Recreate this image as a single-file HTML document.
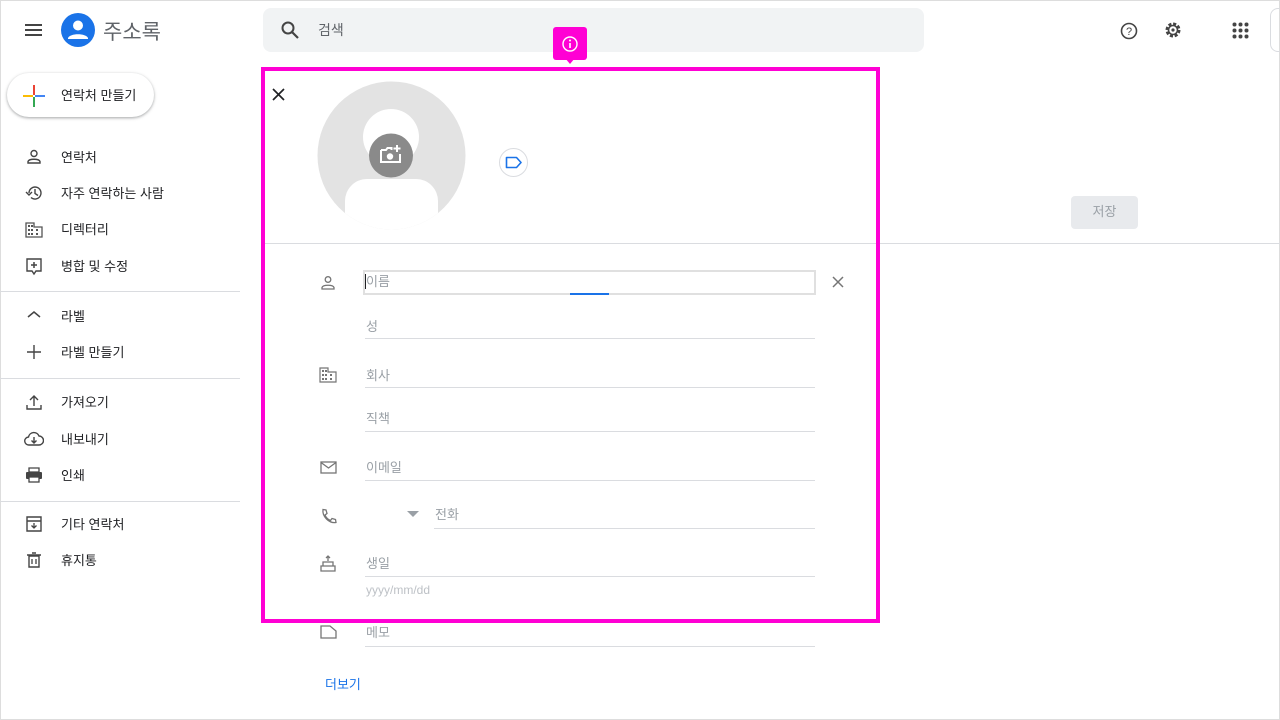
<!DOCTYPE html><html><head><meta charset="utf-8"><style>
*{margin:0;padding:0;box-sizing:border-box}
body{width:1280px;height:720px;position:relative;overflow:hidden;background:#fff;font-family:"Liberation Sans","Noto Sans CJK KR",sans-serif;color:#202124}
.a{position:absolute}
.nav{font-size:13px;color:#202124}
.lbl{font-size:13px;color:#9aa0a6}
.ln{height:1px;background:#dadce0}
.t{margin-top:-1px}
</style></head><body>
<div class="a" style="left:0;top:0;width:1280px;height:720px;border:1px solid #ddd"></div>
<svg class="a" style="left:24px;top:22px" width="20" height="16"><path d="M1 3h17M1 8h17M1 13h17" stroke="#444" stroke-width="2"/></svg>
<svg class="a" style="left:61px;top:13px" width="34" height="34"><circle cx="17" cy="17" r="17" fill="#1a73e8"/><circle cx="17" cy="12.5" r="5" fill="#fff"/><path d="M7 25c2-5 18-5 20 0v1H7z" fill="#fff"/></svg>
<div class="a" style="left:103px;top:16px;font-size:21px;color:#5f6368">주소록</div>
<div class="a" style="left:263px;top:8px;width:661px;height:44px;background:#f1f3f4;border-radius:8px"></div>
<svg class="a" style="left:280px;top:20px" width="20" height="20"><circle cx="8" cy="8" r="5.5" stroke="#444" stroke-width="2" fill="none"/><path d="M12 12l6 6" stroke="#444" stroke-width="2.2"/></svg>
<div class="a" style="left:318px;top:20px;font-size:14px;color:#5f6368">검색</div>
<svg class="a" style="left:1119px;top:21px" width="20" height="20"><circle cx="10" cy="10" r="7.5" stroke="#444" stroke-width="1.6" fill="none"/><text x="10" y="14" font-size="11" text-anchor="middle" fill="#444" font-family="Liberation Sans">?</text></svg>
<svg class="a" style="left:1163px;top:20px" width="20" height="20"><circle cx="10" cy="10" r="6" stroke="#444" stroke-width="3" stroke-dasharray="3 1.7" fill="none"/><circle cx="10" cy="10" r="4.5" stroke="#444" stroke-width="1.6" fill="none"/><circle cx="10" cy="10" r="1.6" fill="#444"/></svg>
<svg class="a" style="left:1232px;top:22px" width="18" height="18"><g fill="#444"><circle cx="2.5" cy="2.5" r="2"/><circle cx="8.5" cy="2.5" r="2"/><circle cx="14.5" cy="2.5" r="2"/><circle cx="2.5" cy="8.5" r="2"/><circle cx="8.5" cy="8.5" r="2"/><circle cx="14.5" cy="8.5" r="2"/><circle cx="2.5" cy="14.5" r="2"/><circle cx="8.5" cy="14.5" r="2"/><circle cx="14.5" cy="14.5" r="2"/></g></svg>
<div class="a" style="left:1270px;top:8px;width:20px;height:44px;border:1px solid #dadce0;border-radius:8px"></div>
<div class="a" style="left:7px;top:73px;width:147px;height:44px;border-radius:22px;background:#fff;box-shadow:0 1px 3px rgba(60,64,67,.35),0 1px 2px rgba(60,64,67,.15)"></div>
<svg class="a" style="left:22px;top:84px" width="24" height="24"><path d="M11 1h2v10h-2z" fill="#ea4335"/><path d="M13 11h10v2H13z" fill="#4285f4"/><path d="M11 13h2v10h-2z" fill="#34a853"/><path d="M1 11h10v2H1z" fill="#fbbc04"/></svg>
<div class="a nav" style="left:61px;top:85px">연락처 만들기</div>
<svg class="a" style="left:25px;top:148px" width="18" height="18"><circle cx="9" cy="5.5" r="3" stroke="#444" stroke-width="1.4" fill="none"/><path d="M3 15v-1.5c1-3 11-3 12 0V15z" stroke="#444" stroke-width="1.4" fill="none"/></svg>
<div class="a nav" style="left:61px;top:147px">연락처</div>
<svg class="a" style="left:25px;top:184px" width="18" height="18"><path d="M4 9a6 6 0 1 1 2 4.5" stroke="#444" stroke-width="1.4" fill="none"/><path d="M1 8l3 3 3-3" stroke="#444" stroke-width="1.4" fill="none"/><path d="M10 5v4.5l3 2" stroke="#444" stroke-width="1.4" fill="none"/></svg>
<div class="a nav" style="left:61px;top:183px">자주 연락하는 사람</div>
<svg class="a" style="left:25px;top:221px" width="18" height="18"><path d="M1 16V2h8v4h8v10z" stroke="#555" stroke-width="1.3" fill="none"/><g fill="#555"><rect x="3" y="4" width="2" height="2"/><rect x="6" y="4" width="2" height="2"/><rect x="3" y="8" width="2" height="2"/><rect x="6" y="8" width="2" height="2"/><rect x="3" y="12" width="2" height="2"/><rect x="6" y="12" width="2" height="2"/><rect x="11" y="8" width="2" height="2"/><rect x="11" y="12" width="2" height="2"/></g></svg>
<div class="a nav" style="left:61px;top:219px">디렉터리</div>
<svg class="a" style="left:25px;top:257px" width="18" height="20"><path d="M2 2h14v12h-5l-2 3-2-3H2z" stroke="#444" stroke-width="1.4" fill="none"/><path d="M9 5v6M6 8h6" stroke="#444" stroke-width="1.5"/></svg>
<div class="a nav" style="left:61px;top:256px">병합 및 수정</div>
<div class="a ln" style="left:0;top:291px;width:240px"></div>
<svg class="a" style="left:27px;top:310px" width="14" height="10"><path d="M1 7l6-5 6 5" stroke="#444" stroke-width="1.5" fill="none"/></svg>
<div class="a nav" style="left:61px;top:306px">라벨</div>
<svg class="a" style="left:27px;top:345px" width="14" height="14"><path d="M7 0v14M0 7h14" stroke="#444" stroke-width="1.4"/></svg>
<div class="a nav" style="left:61px;top:342px">라벨 만들기</div>
<div class="a ln" style="left:0;top:378px;width:240px"></div>
<svg class="a" style="left:26px;top:394px" width="16" height="16"><path d="M8 12V2M4 6l4-4 4 4M1 11v4h14v-4" stroke="#444" stroke-width="1.4" fill="none"/></svg>
<div class="a nav" style="left:61px;top:392px">가져오기</div>
<svg class="a" style="left:24px;top:431px" width="20" height="16"><path d="M5 14a4 4 0 0 1-.5-8A5.5 5.5 0 0 1 15 5a4 4 0 0 1 0 9z" stroke="#444" stroke-width="1.4" fill="none"/><path d="M10 6v6M7.5 9.5l2.5 2.5 2.5-2.5" stroke="#444" stroke-width="1.4" fill="none"/></svg>
<div class="a nav" style="left:61px;top:429px">내보내기</div>
<svg class="a" style="left:25px;top:467px" width="18" height="16"><path d="M4 1h10v4H4z" stroke="#444" stroke-width="1.3" fill="none"/><rect x="1" y="5" width="16" height="7" rx="1" fill="#444"/><rect x="4" y="10" width="10" height="5" fill="#fff" stroke="#444" stroke-width="1.3"/></svg>
<div class="a nav" style="left:61px;top:465px">인쇄</div>
<div class="a ln" style="left:0;top:501px;width:240px"></div>
<svg class="a" style="left:26px;top:516px" width="16" height="16"><path d="M1 1h14v14H1zM1 5h14" stroke="#444" stroke-width="1.4" fill="none"/><path d="M8 7v5M5.5 9.5 8 12l2.5-2.5" stroke="#444" stroke-width="1.3" fill="none"/></svg>
<div class="a nav" style="left:61px;top:514px">기타 연락처</div>
<svg class="a" style="left:27px;top:552px" width="14" height="16"><path d="M2 4h10v11H2zM0 3h14M5 1h4" stroke="#444" stroke-width="1.4" fill="none"/><path d="M5 7v5M9 7v5" stroke="#444" stroke-width="1.3"/></svg>
<div class="a nav" style="left:61px;top:550px">휴지통</div>
<svg class="a" style="left:272px;top:88px" width="13" height="13"><path d="M1 1l11 11M12 1 1 12" stroke="#202124" stroke-width="1.7"/></svg>
<svg class="a" style="left:317px;top:81px" width="149" height="149"><defs><clipPath id="c"><circle cx="74.5" cy="74.5" r="74"/></clipPath></defs><circle cx="74.5" cy="74.5" r="74" fill="#e3e3e3"/><g clip-path="url(#c)" fill="#fff"><circle cx="74" cy="56" r="28"/><rect x="28" y="98" width="93" height="60" rx="22"/></g><circle cx="74" cy="74.5" r="22" fill="#8a8a8a"/><path d="M64 69h5l1.5-2h4v2M64 69v12h19v-8" stroke="#fff" stroke-width="2" fill="none"/><circle cx="73" cy="75.5" r="3.2" fill="#fff"/><path d="M80 64v7M76.5 67.5h7" stroke="#fff" stroke-width="2"/></svg>
<div class="a" style="left:499px;top:148px;width:29px;height:29px;border-radius:50%;border:1px solid #dadce0"></div>
<svg class="a" style="left:505px;top:156px" width="18" height="13"><path d="M1.5 1.5h10l4.5 5-4.5 5h-10z" stroke="#1a73e8" stroke-width="1.6" fill="none" stroke-linejoin="round"/></svg>
<div class="a" style="left:1071px;top:196px;width:67px;height:33px;background:#e8eaed;border-radius:4px;color:#9aa0a6;font-size:13px;text-align:center;line-height:31px">저장</div>
<div class="a ln" style="left:265px;top:243px;width:1015px"></div>
<svg class="a" style="left:320px;top:275px" width="16" height="16"><circle cx="8" cy="4.5" r="2.8" stroke="#757575" stroke-width="1.3" fill="none"/><path d="M2 14v-1.5c1-3 11-3 12 0V14z" stroke="#757575" stroke-width="1.3" fill="none"/></svg>
<div class="a" style="left:363px;top:270px;width:453px;height:25px;border:2px solid #e0e0e0"></div>
<div class="a" style="left:365px;top:274px;width:1px;height:15px;background:#202124"></div>
<div class="a lbl" style="left:366px;top:271px">이름</div>
<div class="a" style="left:570px;top:293px;width:39px;height:2px;background:#1a73e8"></div>
<svg class="a" style="left:832px;top:276px" width="12" height="12"><path d="M1 1l10 10M11 1 1 11" stroke="#757575" stroke-width="1.5"/></svg>
<div class="a lbl" style="left:366px;top:316px">성</div><div class="a ln" style="left:365px;top:338px;width:450px"></div>
<svg class="a" style="left:319px;top:367px" width="18" height="16"><path d="M1 15V1h8v4h8v10z" stroke="#757575" stroke-width="1.2" fill="none"/><g fill="#757575"><rect x="3" y="3" width="2" height="2"/><rect x="6" y="3" width="2" height="2"/><rect x="3" y="7" width="2" height="2"/><rect x="6" y="7" width="2" height="2"/><rect x="3" y="11" width="2" height="2"/><rect x="6" y="11" width="2" height="2"/><rect x="11" y="7" width="2" height="2"/><rect x="11" y="11" width="2" height="2"/></g></svg>
<div class="a lbl" style="left:366px;top:365px">회사</div><div class="a ln" style="left:365px;top:387px;width:450px"></div>
<div class="a lbl" style="left:366px;top:408px">직책</div><div class="a ln" style="left:365px;top:431px;width:450px"></div>
<svg class="a" style="left:320px;top:461px" width="17" height="13"><rect x="1" y="1" width="15" height="11" stroke="#757575" stroke-width="1.3" fill="none"/><path d="M1 1.5l7.5 5.5 7.5-5.5" stroke="#757575" stroke-width="1.3" fill="none"/></svg>
<div class="a lbl" style="left:366px;top:457px">이메일</div><div class="a ln" style="left:365px;top:480px;width:450px"></div>
<svg class="a" style="left:320px;top:508px" width="17" height="17"><path d="M3 1.5l3 .5 1 3.5-2 1.5c1 2.5 3 4.5 5.5 5.5l1.5-2 3.5 1 .5 3c-7 1-14-6-13-13z" stroke="#757575" stroke-width="1.3" fill="none"/></svg>
<svg class="a" style="left:407px;top:511px" width="12" height="7"><path d="M0 0h12L6 6z" fill="#9aa0a6"/></svg>
<div class="a lbl" style="left:435px;top:504px">전화</div><div class="a ln" style="left:434px;top:528px;width:381px"></div>
<svg class="a" style="left:320px;top:555px" width="16" height="17"><path d="M8 1v5M6 3l2-2 2 2" stroke="#757575" stroke-width="1.3" fill="none"/><path d="M3 7h10v4H3zM1 11h14v5H1z" stroke="#757575" stroke-width="1.3" fill="none"/></svg>
<div class="a lbl" style="left:366px;top:553px">생일</div><div class="a ln" style="left:365px;top:576px;width:450px"></div>
<div class="a lbl" style="left:366px;top:583px;font-size:12px;color:#bdc1c6">yyyy/mm/dd</div>
<svg class="a" style="left:320px;top:625px" width="17" height="14"><path d="M1 1h9l6 5v7H1z" stroke="#757575" stroke-width="1.3" fill="none"/></svg>
<div class="a lbl" style="left:366px;top:622px">메모</div><div class="a ln" style="left:365px;top:646px;width:450px"></div>
<div class="a" style="left:325px;top:674px;font-size:13px;color:#1a73e8">더보기</div>
<div class="a" style="left:261px;top:67px;width:619px;height:556px;border:4px solid #ff00d4"></div>
<div class="a" style="left:553px;top:27px;width:34px;height:33px;background:#ff00d4;border-radius:3px"></div>
<div class="a" style="left:565px;top:58px;width:0;height:0;border-left:5px solid transparent;border-right:5px solid transparent;border-top:6px solid #ff00d4"></div>
<svg class="a" style="left:561px;top:35px" width="18" height="18"><circle cx="9" cy="9" r="7" stroke="#fff" stroke-width="1.4" fill="none"/><path d="M9 8v5" stroke="#fff" stroke-width="1.6"/><circle cx="9" cy="5.5" r="1" fill="#fff"/></svg>
</body></html>
